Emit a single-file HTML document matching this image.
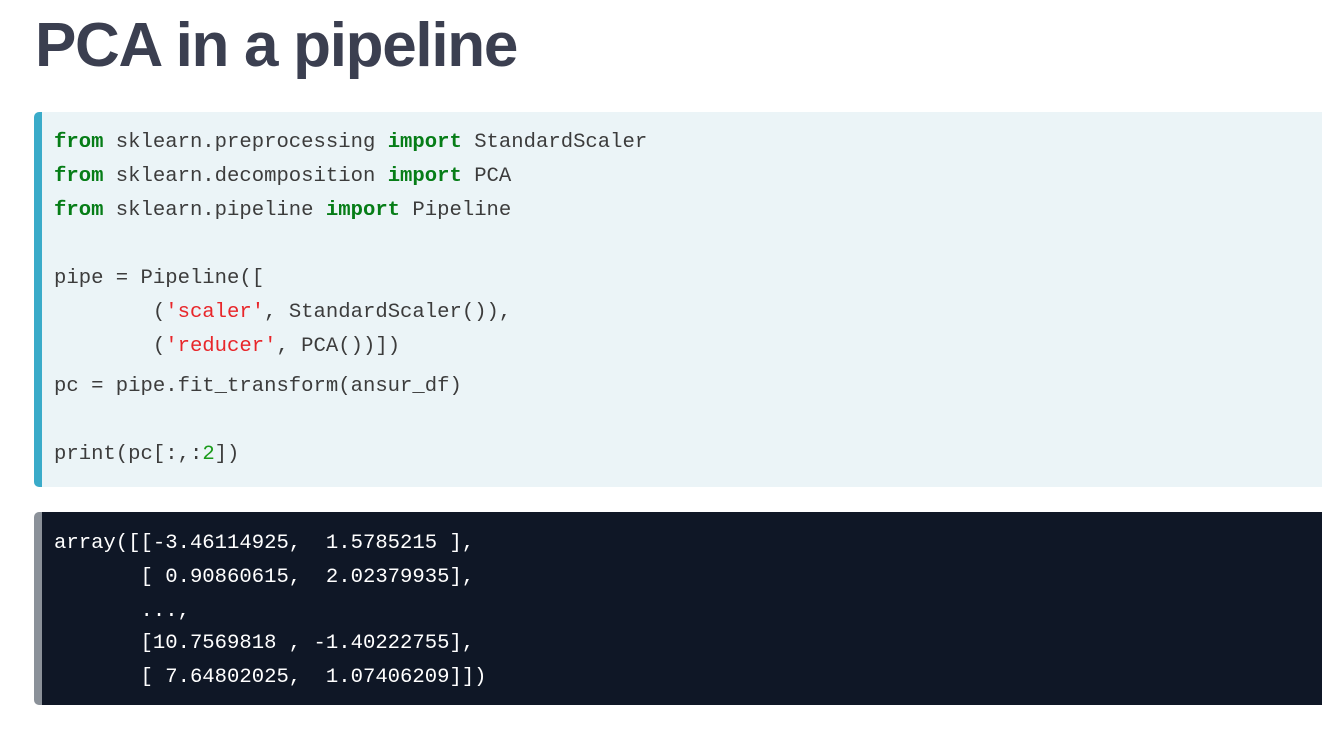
<!DOCTYPE html>
<html><head><meta charset="utf-8"><style>
html,body{margin:0;padding:0;background:#fff;width:1322px;height:738px;overflow:hidden}
h1{position:absolute;left:35px;top:10px;margin:0;font:bold 62px "Liberation Sans",sans-serif;color:#3b3f50;letter-spacing:-1.3px}
.blk{position:absolute;left:34px;width:1288px;border-radius:5px 0 0 5px}
.code{top:112px;height:375px;background:#ebf4f7;border-left:8px solid #3aabc9;box-sizing:border-box}
.out{top:512px;height:193px;background:#0f1726;border-left:8px solid #8b9199;box-sizing:border-box}
.l{position:absolute;left:12px;font:20.6px "Liberation Mono",monospace;white-space:pre;line-height:24px;color:#3c3c3c}
.out .l{color:#fff}
.k{color:#067d17;font-weight:bold}
.s{color:#e8262a}
.n{color:#1a9a1a}
</style></head><body>
<h1>PCA in a pipeline</h1>
<div class="blk code">
<div class="l" style="top:19px"><span class="k">from</span> sklearn.preprocessing <span class="k">import</span> StandardScaler</div>
<div class="l" style="top:53px"><span class="k">from</span> sklearn.decomposition <span class="k">import</span> PCA</div>
<div class="l" style="top:87px"><span class="k">from</span> sklearn.pipeline <span class="k">import</span> Pipeline</div>
<div class="l" style="top:155px">pipe = Pipeline([</div>
<div class="l" style="top:189px">        (<span class="s">'scaler'</span>, StandardScaler()),</div>
<div class="l" style="top:223px">        (<span class="s">'reducer'</span>, PCA())])</div>
<div class="l" style="top:263px">pc = pipe.fit_transform(ansur_df)</div>
<div class="l" style="top:331px">print(pc[:,:<span class="n">2</span>])</div>
</div>
<div class="blk out">
<div class="l" style="top:20px">array([[-3.46114925,  1.5785215 ],</div>
<div class="l" style="top:54px">       [ 0.90860615,  2.02379935],</div>
<div class="l" style="top:88px">       ...,</div>
<div class="l" style="top:120px">       [10.7569818 , -1.40222755],</div>
<div class="l" style="top:154px">       [ 7.64802025,  1.07406209]])</div>
</div>
</body></html>
